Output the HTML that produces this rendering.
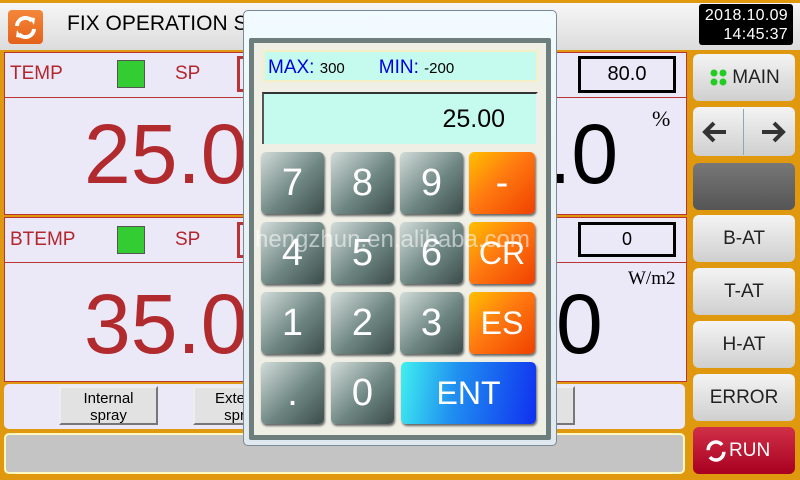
<!DOCTYPE html>
<html><head><style>
*{margin:0;padding:0;box-sizing:border-box}
body{width:800px;height:480px;overflow:hidden;background:#e0990e;font-family:"Liberation Sans",sans-serif;position:relative}
.a{position:absolute}
.hdr{left:0;top:3px;width:800px;height:47px;background:linear-gradient(#f6f6f6,#dcdcdc)}
.panel{background:#ebe8f8;border:1px solid #b33}
.lab{color:#b3262e;font-size:19px}
.grn{background:#33cc33;border:1px solid #555;width:28px;height:28px}
.box{border:3px solid #000;background:#ebe8f8;font-size:20px;text-align:center}
.big{color:#b02a2e;font-size:84px;line-height:1}
.rb{left:693px;width:102px;border-radius:6px;background:linear-gradient(#f4f4f4,#cfcfcf);font-size:19px;color:#222;display:flex;align-items:center;justify-content:center}
.k{border-radius:5px;background:linear-gradient(135deg,#d2dcd9,#6e8682 55%,#3c4d4a);color:#fff;font-size:38px;display:flex;align-items:center;justify-content:center;box-shadow:1px 2px 2px #666;width:63px;height:62px}
.o{background:linear-gradient(135deg,#ffc000,#ff7a10 45%,#f04000)}
.sb{border:2px solid #777;border-top-color:#eee;border-left-color:#eee;background:#e2e2e2;font-size:15px;text-align:center;line-height:17px}
</style></head><body>
<div class="a hdr"></div>
<div class="a" style="left:8px;top:10px;width:35px;height:34px;border-radius:4px;background:linear-gradient(#f5873a,#e4621a)"></div>
<svg class="a" style="left:12px;top:14px" width="27" height="27" viewBox="0 0 27 27"><path d="M5 12a8.5 8.5 0 0 1 15-5" stroke="#fff" stroke-width="4" fill="none"/><path d="M22 15a8.5 8.5 0 0 1-15 5" stroke="#fff" stroke-width="4" fill="none"/><path d="M17 3l6 1-1 7z M10 24l-6-1 1-7z" fill="#fff"/></svg>
<div class="a" style="left:67px;top:12px;font-size:21px">FIX OPERATION S</div>
<div class="a" style="left:699px;top:4px;width:94px;height:41px;background:#000;border-radius:3px;color:#fff;font-size:16px;text-align:right;padding:2px 5px;line-height:19px;letter-spacing:0.3px">2018.10.09<br>14:45:37</div>

<div class="a panel" style="left:4px;top:52px;width:683px;height:163px"></div>
<div class="a" style="left:5px;top:97px;width:681px;height:1px;background:#b33"></div>
<div class="a lab" style="left:10px;top:63px">TEMP</div>
<div class="a grn" style="left:117px;top:60px"></div>
<div class="a lab" style="left:175px;top:63px">SP</div>
<div class="a" style="left:237px;top:56px;width:8px;height:36px;border:3px solid #b33;border-right:none"></div>
<div class="a box" style="left:578px;top:56px;width:98px;height:37px;line-height:31px">80.0</div>
<div class="a big" style="left:84px;top:112px">25.00</div>
<div class="a" style="left:548px;top:112px;font-size:84px;line-height:1">.0</div>
<div class="a" style="left:652px;top:106px;font-size:22px;font-family:'Liberation Serif',serif">%</div>

<div class="a panel" style="left:4px;top:217px;width:683px;height:165px"></div>
<div class="a" style="left:5px;top:262px;width:681px;height:1px;background:#b33"></div>
<div class="a lab" style="left:10px;top:229px">BTEMP</div>
<div class="a grn" style="left:117px;top:226px"></div>
<div class="a lab" style="left:175px;top:229px">SP</div>
<div class="a" style="left:237px;top:222px;width:8px;height:36px;border:3px solid #b33;border-right:none"></div>
<div class="a box" style="left:578px;top:222px;width:98px;height:35px;line-height:29px;font-size:18px">0</div>
<div class="a big" style="left:84px;top:282px">35.00</div>
<div class="a" style="left:556px;top:282px;font-size:84px;line-height:1">0</div>
<div class="a" style="left:628px;top:268px;font-size:19px;font-family:'Liberation Serif',serif">W/m2</div>

<div class="a" style="left:4px;top:384px;width:681px;height:45px;background:#ebe8f8;border-radius:5px"></div>
<div class="a sb" style="left:59px;top:386px;width:99px;height:39px;padding-top:2px">Internal<br>spray</div>
<div class="a sb" style="left:193px;top:386px;width:99px;height:39px;padding-top:2px">External<br>spray</div>
<div class="a sb" style="left:540px;top:386px;width:35px;height:39px"></div>
<div class="a" style="left:4px;top:433px;width:681px;height:41px;background:#c4c4c4;border:2px solid #fff8c0;border-radius:5px"></div>

<div class="a rb" style="top:54px;height:47px"><svg width="24" height="20"><circle cx="6" cy="5" r="3.5" fill="#2c2"/><circle cx="15" cy="5" r="3.5" fill="#2c2"/><circle cx="6" cy="14" r="3.5" fill="#2c2"/><circle cx="15" cy="14" r="3.5" fill="#2c2"/></svg>MAIN</div>
<div class="a rb" style="top:107px;height:49px;justify-content:space-around"><svg width="30" height="26"><path d="M26 13H6M14 4L5 13l9 9" stroke="#333" stroke-width="4" fill="none"/></svg><div style="width:1px;height:46px;background:#8ab"></div><svg width="30" height="26"><path d="M4 13h20M16 4l9 9-9 9" stroke="#333" stroke-width="4" fill="none"/></svg></div>
<div class="a rb" style="top:163px;height:47px;background:linear-gradient(#777,#555)"></div>
<div class="a rb" style="top:215px;height:47px">B-AT</div>
<div class="a rb" style="top:268px;height:47px">T-AT</div>
<div class="a rb" style="top:321px;height:47px">H-AT</div>
<div class="a rb" style="top:374px;height:47px">ERROR</div>
<div class="a rb" style="top:427px;height:47px;background:linear-gradient(#d03048,#a80020);color:#fff;justify-content:flex-start;padding-left:10px"><svg width="26" height="26" viewBox="0 0 30 30"><path d="M6 14a9 9 0 0 1 16-6" stroke="#fff" stroke-width="4" fill="none"/><path d="M24 16a9 9 0 0 1-16 6" stroke="#fff" stroke-width="4" fill="none"/></svg>RUN</div>

<div class="a" style="left:243px;top:10px;width:314px;height:436px;background:linear-gradient(#f2fbff,#dfe9ef);border:1px solid #7a8a96;border-radius:5px"></div>
<div class="a" style="left:249px;top:38px;width:302px;height:402px;background:#6e7e7c;border-radius:2px"></div>
<div class="a" style="left:254px;top:43px;width:292px;height:392px;background:#efefe6"></div>
<div class="a" style="left:263px;top:50px;width:275px;height:32px;background:#c5fbee;border:2px solid #f3f0c8;font-size:19px;padding:5px 0 0 3px"><span style="color:#0000dd">MAX:</span> <span style="font-size:15px">300</span><span style="color:#0000dd;margin-left:34px">MIN:</span> <span style="font-size:15px">-200</span></div>
<div class="a" style="left:262px;top:92px;width:276px;height:52px;background:#c5fbee;border-top:2px solid #333;border-left:2px solid #555;border-right:2px solid #eee;font-size:25px;text-align:right;padding:11px 31px 0 0">25.00</div>

<div class="a k" style="left:261px;top:152px">7</div>
<div class="a k" style="left:331px;top:152px">8</div>
<div class="a k" style="left:400px;top:152px">9</div>
<div class="a k o" style="left:469px;top:152px;width:66px">-</div>
<div class="a k" style="left:261px;top:222px">4</div>
<div class="a k" style="left:331px;top:222px">5</div>
<div class="a k" style="left:400px;top:222px">6</div>
<div class="a k o" style="left:469px;top:222px;width:66px;font-size:32px">CR</div>
<div class="a k" style="left:261px;top:292px">1</div>
<div class="a k" style="left:331px;top:292px">2</div>
<div class="a k" style="left:400px;top:292px">3</div>
<div class="a k o" style="left:469px;top:292px;width:66px;font-size:32px">ES</div>
<div class="a k" style="left:261px;top:362px">.</div>
<div class="a k" style="left:331px;top:362px">0</div>
<div class="a k" style="left:401px;top:362px;width:135px;background:linear-gradient(100deg,#40f0f0,#2090f0 40%,#1030f0);font-size:32px">ENT</div>
<div class="a" style="left:255px;top:226px;font-size:24px;color:rgba(255,255,255,.55)">hengzhun.en.alibaba.com</div>
</body></html>
